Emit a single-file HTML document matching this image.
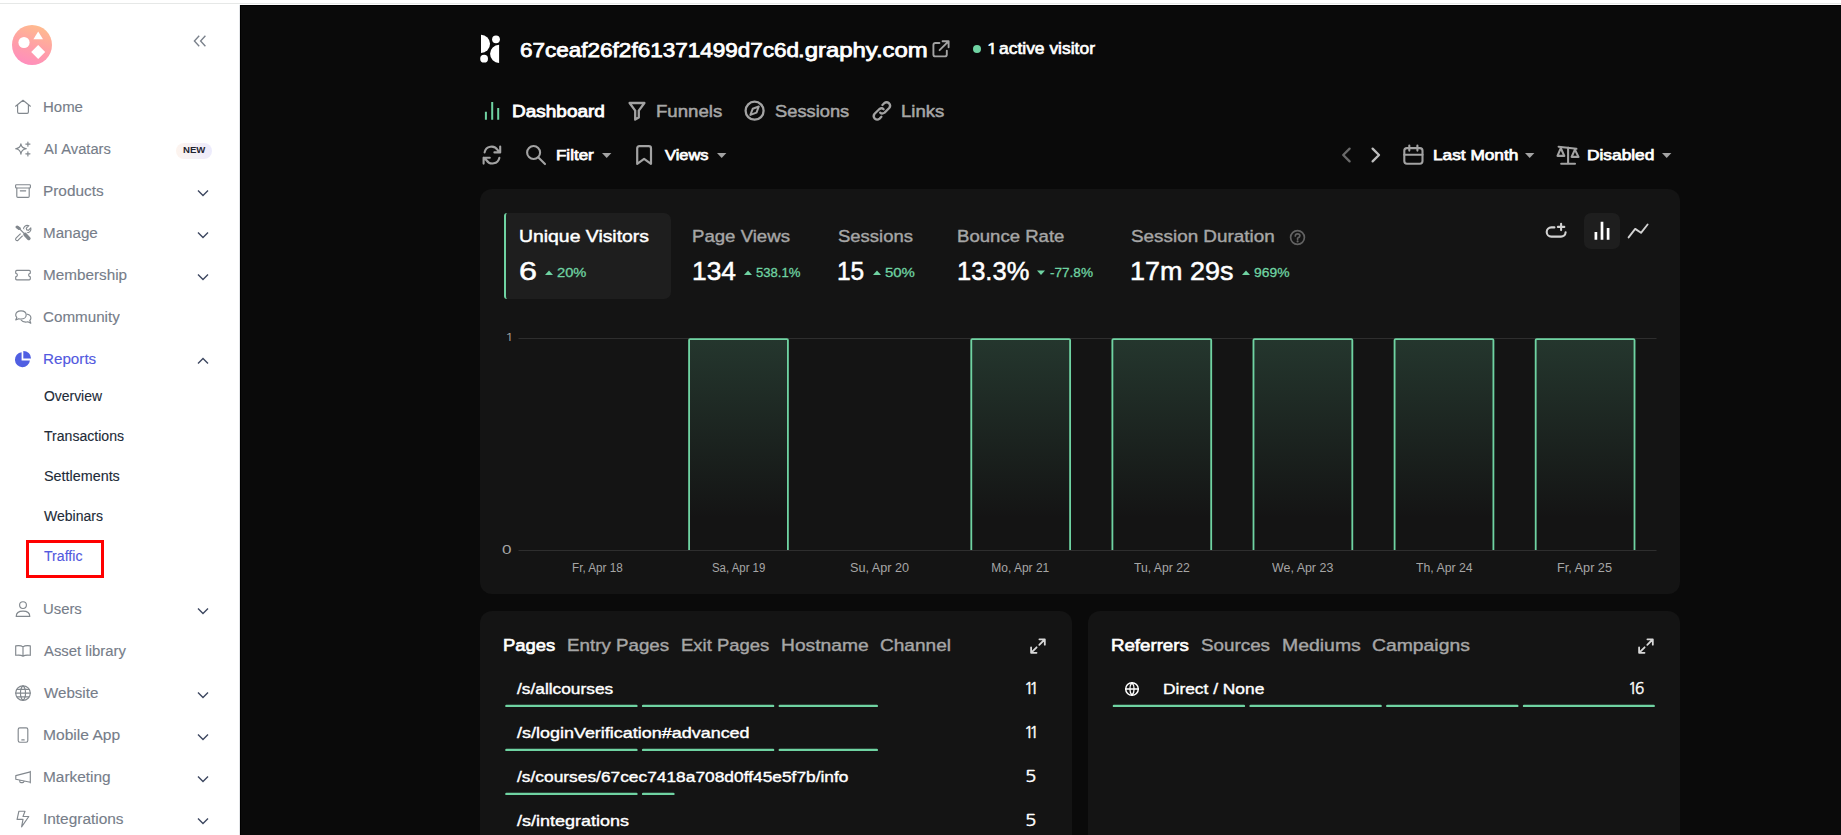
<!DOCTYPE html>
<html lang="en"><head><meta charset="utf-8"><title>Traffic - Dashboard</title>
<style>
*{box-sizing:border-box;margin:0;padding:0}
html,body{width:1841px;height:835px;overflow:hidden;background:#fff;font-family:"Liberation Sans",sans-serif}
.t{position:absolute;white-space:nowrap;line-height:1;transform-origin:0 0;display:block}
.abs{position:absolute}
h1{font-size:inherit;font-weight:inherit;margin:0}
svg{position:absolute;overflow:visible}
#topline{position:absolute;left:0;top:3px;width:1841px;height:1px;background:#e6e8e7}
#sidebar{position:absolute;left:0;top:5px;width:240px;height:830px;background:#fff;border-right:1px solid #e3e5e8}
#main{position:absolute;left:240px;top:5px;width:1601px;height:830px;background:#0a0a0a;border-top:1px solid #000;border-left:1px solid #000}
.card{position:absolute;background:#141414;border-radius:12px}
</style></head>
<body>
<div id="topline"></div>

<nav>
<div id="sidebar"></div>
<div class="abs" style="left:12px;top:25px;width:40px;height:40px;border-radius:50%;background:linear-gradient(200deg,#ffbb8e 10%,#ff9ea8 55%,#ff8cc0 95%)"></div>
<svg style="left:12px;top:25px" width="40" height="40" viewBox="0 0 40 40"><circle cx="12" cy="17.5" r="5.6" fill="#fff"/><path d="M26.2 6.5 L31 14.3 L21.4 14.3 Z" fill="#fff"/><path d="M26.2 20 L33.2 27 L26.2 34 L19.2 27 Z" fill="#fff"/></svg>
<svg style="left:193px;top:35px" width="14" height="12" viewBox="0 0 14 12"><path d="M6.2 0.8 L1.4 6 L6.2 11.2 M12.4 0.8 L7.6 6 L12.4 11.2" fill="none" stroke="#7a818b" stroke-width="1.35"/></svg>
<div class="abs" style="left:176px;top:143px;width:36px;height:16px;border-radius:8px;background:linear-gradient(90deg,#fdf4ee,#ecebfc)"></div>
<span class="t" style="left:183.12px;top:145.53px;font-size:9.3px;font-weight:700;color:#1f2430;transform:scaleX(1.0296);">NEW</span>
<div class="navitem"><span class="t" style="left:42.53px;top:99.95px;font-size:14px;color:#767d89;-webkit-text-stroke:0.12px #767d89;transform:scaleX(1.0698);">Home</span></div>
<div class="navitem"><span class="t" style="left:43.98px;top:141.95px;font-size:14px;color:#767d89;-webkit-text-stroke:0.12px #767d89;transform:scaleX(1.0526);">AI Avatars</span></div>
<div class="navitem"><span class="t" style="left:42.74px;top:183.95px;font-size:14px;color:#767d89;-webkit-text-stroke:0.12px #767d89;transform:scaleX(1.0972);">Products</span><svg style="left:197px;top:189.4px" width="12" height="8" viewBox="0 0 12 8"><path d="M1 1.4 L6 6.4 L11 1.4" fill="none" stroke="#3d4760" stroke-width="1.4"/></svg></div>
<div class="navitem"><span class="t" style="left:42.93px;top:225.95px;font-size:14px;color:#767d89;-webkit-text-stroke:0.12px #767d89;transform:scaleX(1.0827);">Manage</span><svg style="left:197px;top:231.4px" width="12" height="8" viewBox="0 0 12 8"><path d="M1 1.4 L6 6.4 L11 1.4" fill="none" stroke="#3d4760" stroke-width="1.4"/></svg></div>
<div class="navitem"><span class="t" style="left:42.74px;top:267.95px;font-size:14px;color:#767d89;-webkit-text-stroke:0.12px #767d89;transform:scaleX(1.0912);">Membership</span><svg style="left:197px;top:273.40000000000003px" width="12" height="8" viewBox="0 0 12 8"><path d="M1 1.4 L6 6.4 L11 1.4" fill="none" stroke="#3d4760" stroke-width="1.4"/></svg></div>
<div class="navitem"><span class="t" style="left:43.12px;top:309.95px;font-size:14px;color:#767d89;-webkit-text-stroke:0.12px #767d89;transform:scaleX(1.0845);">Community</span></div>
<div class="navitem"><span class="t" style="left:42.98px;top:601.75px;font-size:14px;color:#767d89;-webkit-text-stroke:0.12px #767d89;transform:scaleX(1.0606);">Users</span><svg style="left:197px;top:607.2px" width="12" height="8" viewBox="0 0 12 8"><path d="M1 1.4 L6 6.4 L11 1.4" fill="none" stroke="#3d4760" stroke-width="1.4"/></svg></div>
<div class="navitem"><span class="t" style="left:43.79px;top:643.75px;font-size:14px;color:#767d89;-webkit-text-stroke:0.12px #767d89;transform:scaleX(1.0623);">Asset library</span></div>
<div class="navitem"><span class="t" style="left:43.80px;top:685.75px;font-size:14px;color:#767d89;-webkit-text-stroke:0.12px #767d89;transform:scaleX(1.0786);">Website</span><svg style="left:197px;top:691.2px" width="12" height="8" viewBox="0 0 12 8"><path d="M1 1.4 L6 6.4 L11 1.4" fill="none" stroke="#3d4760" stroke-width="1.4"/></svg></div>
<div class="navitem"><span class="t" style="left:42.72px;top:727.75px;font-size:14px;color:#767d89;-webkit-text-stroke:0.12px #767d89;transform:scaleX(1.1133);">Mobile App</span><svg style="left:197px;top:733.2px" width="12" height="8" viewBox="0 0 12 8"><path d="M1 1.4 L6 6.4 L11 1.4" fill="none" stroke="#3d4760" stroke-width="1.4"/></svg></div>
<div class="navitem"><span class="t" style="left:42.73px;top:769.75px;font-size:14px;color:#767d89;-webkit-text-stroke:0.12px #767d89;transform:scaleX(1.1008);">Marketing</span><svg style="left:197px;top:775.2px" width="12" height="8" viewBox="0 0 12 8"><path d="M1 1.4 L6 6.4 L11 1.4" fill="none" stroke="#3d4760" stroke-width="1.4"/></svg></div>
<div class="navitem"><span class="t" style="left:43.01px;top:811.75px;font-size:14px;color:#767d89;-webkit-text-stroke:0.12px #767d89;transform:scaleX(1.1001);">Integrations</span><svg style="left:197px;top:817.2px" width="12" height="8" viewBox="0 0 12 8"><path d="M1 1.4 L6 6.4 L11 1.4" fill="none" stroke="#3d4760" stroke-width="1.4"/></svg></div>
<div class="navitem active"><span class="t" style="left:42.75px;top:351.85px;font-size:14px;color:#5259e0;-webkit-text-stroke:0.12px #5259e0;transform:scaleX(1.0853);">Reports</span><svg style="left:197px;top:357.2px" width="12" height="8" viewBox="0 0 12 8"><path d="M1 6.6 L6 1.6 L11 6.6" fill="none" stroke="#3d4760" stroke-width="1.4"/></svg></div>
<div class="subitem"><span class="t" style="left:44.23px;top:388.95px;font-size:14px;color:#222b38;-webkit-text-stroke:0.12px #222b38;transform:scaleX(0.9939);">Overview</span></div>
<div class="subitem"><span class="t" style="left:44.09px;top:428.95px;font-size:14px;color:#222b38;-webkit-text-stroke:0.12px #222b38;transform:scaleX(1.0048);">Transactions</span></div>
<div class="subitem"><span class="t" style="left:43.68px;top:468.95px;font-size:14px;color:#222b38;-webkit-text-stroke:0.12px #222b38;transform:scaleX(1.0254);">Settlements</span></div>
<div class="subitem"><span class="t" style="left:44.19px;top:508.95px;font-size:14px;color:#222b38;-webkit-text-stroke:0.12px #222b38;transform:scaleX(1.0011);">Webinars</span></div>
<div class="subitem"><span class="t" style="left:44.23px;top:548.95px;font-size:14px;color:#5259e0;-webkit-text-stroke:0.12px #5259e0;transform:scaleX(1.0083);">Traffic</span></div>

<svg style="left:15px;top:99px" width="16" height="16" viewBox="0 0 16 16"><path d="M0.6 7.2 L8 1.3 L15.4 7.2 M2.6 5.8 V13 Q2.6 14.3 3.9 14.3 H12.1 Q13.4 14.3 13.4 13 V5.8" fill="none" stroke="#82888e" stroke-width="1.15" stroke-linejoin="round" stroke-linecap="round"/></svg><svg style="left:15px;top:141px" width="16" height="16" viewBox="0 0 16 16"><path d="M5.9 2.9 Q6.4 7.2 11.4 7.7 Q6.4 8.2 5.9 13.2 Q5.4 8.2 0.6 7.7 Q5.4 7.2 5.9 2.9 Z" fill="none" stroke="#82888e" stroke-width="1.15" stroke-linejoin="round" stroke-linecap="round"/><path d="M12.9 1 V5.2 M10.8 3.1 H15 M12.9 10.7 V14.9 M10.8 12.8 H15" fill="none" stroke="#82888e" stroke-width="1.15" stroke-linejoin="round" stroke-linecap="round"/></svg><svg style="left:15px;top:183px" width="16" height="16" viewBox="0 0 16 16"><rect x="0.6" y="1.7" width="14.8" height="3.3" rx="0.8" fill="none" stroke="#82888e" stroke-width="1.15" stroke-linejoin="round" stroke-linecap="round"/><path d="M1.8 5 V13.2 Q1.8 14.3 2.9 14.3 H13.1 Q14.2 14.3 14.2 13.2 V5 M5.3 7.8 H10.7" fill="none" stroke="#82888e" stroke-width="1.15" stroke-linejoin="round" stroke-linecap="round"/></svg><svg style="left:15px;top:225px" width="16" height="16" viewBox="0 0 16 16"><path d="M1 13.1 L8.7 5.6 Q7.9 3 9.7 1.4 Q11.6 -0.1 13.9 0.7 L11.3 3.2 L11.7 4.9 L13.4 5.3 L15.8 2.9 Q16.4 5.1 14.9 6.7 Q13.2 8.3 10.8 7.7 L3.1 15.2 Q2 16 1 15.1 Q0.2 14.2 1 13.1 Z" fill="none" stroke="#82888e" stroke-width="1.15" stroke-linejoin="round" stroke-linecap="round"/><path d="M1.5 1.5 L4.6 3.7 M4.4 3.7 L9.8 9.1 M10 9.4 L14 13.6" fill="none" stroke="#fff" stroke-linecap="round" stroke-width="5.2"/><path d="M1.7 1.6 L4.6 3.6" fill="none" stroke="#82888e" stroke-width="2.9" stroke-linecap="butt"/><path d="M0.5 1.6 L1.9 0.4 L5.9 3 L5.7 4.7 L3.6 5.1 L0.5 2.4 Z" fill="#82888e"/><path d="M4.6 3.9 L9.8 9.1" fill="none" stroke="#82888e" stroke-width="1.3"/><path d="M10.1 9.5 L13.8 13.4" fill="none" stroke="#82888e" stroke-width="3.7" stroke-linecap="round"/></svg><svg style="left:15px;top:268px" width="16" height="14" viewBox="0 0 16 14"><path d="M0.7 3.4 Q0.7 2.4 1.7 2.4 H14.3 Q15.3 2.4 15.3 3.4 V5.3 Q13.6 5.6 13.6 7.1 Q13.6 8.6 15.3 8.9 V10.8 Q15.3 11.8 14.3 11.8 H1.7 Q0.7 11.8 0.7 10.8 V8.9 Q2.4 8.6 2.4 7.1 Q2.4 5.6 0.7 5.3 Z" fill="none" stroke="#82888e" stroke-width="1.15" stroke-linejoin="round" stroke-linecap="round"/></svg><svg style="left:15px;top:309px" width="17" height="16" viewBox="0 0 17 16"><path d="M6 1.8 C9.2 1.8 11.2 3.6 11.2 5.9 C11.2 8.2 9.2 10 6 10 C5.2 10 4.5 9.9 3.8 9.7 L0.7 10.9 L1.8 8.4 C1.1 7.7 0.7 6.8 0.7 5.9 C0.7 3.6 2.8 1.8 6 1.8 Z" fill="none" stroke="#82888e" stroke-width="1.15" stroke-linejoin="round" stroke-linecap="round"/><path d="M12.3 5.2 C14.4 5.6 15.9 7.1 15.9 9 C15.9 9.9 15.5 10.8 14.8 11.5 L15.8 14.3 L12.8 12.8 C12.2 13 11.5 13.1 10.7 13.1 C8.6 13.1 6.9 12.3 6.1 11" fill="none" stroke="#82888e" stroke-width="1.15" stroke-linejoin="round" stroke-linecap="round"/></svg><svg style="left:14px;top:350px" width="18" height="18" viewBox="0 0 18 18"><path d="M7.6 2.2 A7.5 7.5 0 1 0 15.9 10.4 L7.6 10.4 Z" fill="#505fe2"/><path d="M9.3 0.9 A7.7 7.7 0 0 1 17.1 8.5 L9.3 8.5 Z" fill="#505fe2"/></svg><svg style="left:15px;top:600px" width="16" height="18" viewBox="0 0 16 18"><circle cx="8" cy="5.1" r="3.4" fill="none" stroke="#82888e" stroke-width="1.15" stroke-linejoin="round" stroke-linecap="round"/><path d="M1.2 16.4 C1.2 13 4 11.1 8 11.1 C12 11.1 14.8 13 14.8 16.4 Z" fill="none" stroke="#82888e" stroke-width="1.15" stroke-linejoin="round" stroke-linecap="round"/></svg><svg style="left:15px;top:644px" width="16" height="14" viewBox="0 0 16 14"><path d="M8 2.9 C6.4 1.6 3.6 1.5 0.7 1.9 V11.3 C3.6 10.9 6.4 11 8 12.2 C9.6 11 12.4 10.9 15.3 11.3 V1.9 C12.4 1.5 9.6 1.6 8 2.9 Z M8 2.9 V12.2" fill="none" stroke="#82888e" stroke-width="1.15" stroke-linejoin="round" stroke-linecap="round"/></svg><svg style="left:15px;top:685px" width="16" height="16" viewBox="0 0 16 16"><circle cx="8" cy="8.1" r="7.3" fill="none" stroke="#82888e" stroke-width="1.15" stroke-linejoin="round" stroke-linecap="round"/><path d="M0.7 8.1 H15.3 M1.8 4.4 H14.2 M1.8 11.8 H14.2 M8 0.8 C4.6 3.6 4.6 12.6 8 15.4 M8 0.8 C11.4 3.6 11.4 12.6 8 15.4" fill="none" stroke="#82888e" stroke-width="1.15" stroke-linejoin="round" stroke-linecap="round"/></svg><svg style="left:15px;top:726px" width="16" height="18" viewBox="0 0 16 18"><rect x="3.2" y="1.8" width="9.6" height="14.4" rx="1.6" fill="none" stroke="#82888e" stroke-width="1.15" stroke-linejoin="round" stroke-linecap="round"/><path d="M6.8 13.9 H9.2" fill="none" stroke="#82888e" stroke-width="1.15" stroke-linejoin="round" stroke-linecap="round"/></svg><svg style="left:15px;top:770px" width="16" height="14" viewBox="0 0 16 14"><path d="M15.3 1.2 V12.8 M15.3 1.9 L0.8 5.6 V9.3 L15.3 12.2 M4.8 10.2 V11.4 Q4.8 12.6 6 12.6 H7.6 Q8.8 12.6 8.8 11.4 V11" fill="none" stroke="#82888e" stroke-width="1.15" stroke-linejoin="round" stroke-linecap="round"/></svg><svg style="left:15px;top:810px" width="16" height="18" viewBox="0 0 16 18"><path d="M3.9 1.2 H10 L8 6.5 H13.8 L6.6 16.8 L8 9.4 H2.1 Z" fill="none" stroke="#82888e" stroke-width="1.15" stroke-linejoin="round" stroke-linecap="round"/></svg>
<div class="abs" style="left:26px;top:540px;width:78px;height:38px;border:3px solid #f00"></div>
</nav>

<main>
<div id="main"></div>
<header><svg style="left:480px;top:34px" width="20" height="30" viewBox="0 0 20 30"><path d="M1 0.8 A9.05 9.05 0 0 1 1 18.9 Z" fill="#fff"/><circle cx="16" cy="5.3" r="3.9" fill="#fff"/><circle cx="4.1" cy="24.7" r="3.9" fill="#fff"/><path d="M19.1 10.8 A9.05 9.05 0 0 0 19.1 28.9 Z" fill="#fff"/></svg><h1><span class="t" style="left:519.72px;top:40.79px;font-size:19.6px;color:#ffffff;-webkit-text-stroke:0.75px #ffffff;transform:scaleX(1.1487);">67ceaf26f2f61371499d7c6d</span><span class="t" style="left:797.72px;top:40.79px;font-size:19.6px;color:#ffffff;-webkit-text-stroke:0.75px #ffffff;transform:scaleX(1.2196);">.graphy.com</span></h1><svg style="left:932px;top:40px" width="18" height="18" viewBox="0 0 18 18"><path d="M7.4 3 H3.4 Q1.4 3 1.4 5 V14.4 Q1.4 16.4 3.4 16.4 H12.8 Q14.8 16.4 14.8 14.4 V10.6 M10.6 1.2 H16.6 V7.2 M16.4 1.4 L7.6 10.2" fill="none" stroke="#a3a3a3" stroke-width="1.9" stroke-linejoin="round" stroke-linecap="round"/></svg><div class="abs" style="left:972.8px;top:44.8px;width:8.3px;height:8.3px;border-radius:50%;background:#6fd3a2"></div><span class="t" style="left:986.21px;top:41.77px;font-size:14.8px;color:#ffffff;-webkit-text-stroke:0.65px #ffffff;font-family:NanumGothic,'Liberation Sans',sans-serif;transform:scaleX(1.3085);">1 </span><span class="t" style="left:998.64px;top:40.76px;font-size:16px;color:#ffffff;-webkit-text-stroke:0.65px #ffffff;transform:scaleX(1.0899);">active visitor</span></header>
<div class="tabs"><svg style="left:484px;top:101px" width="16" height="20" viewBox="0 0 16 20"><path d="M1.9 10.7 V18.8 M8.2 0.9 V18.8 M14.2 6.9 V18.8" fill="none" stroke="#6fd3a2" stroke-width="2" stroke-linecap="butt"/></svg><span class="t" style="left:511.82px;top:104.30px;font-size:16.9px;color:#ffffff;-webkit-text-stroke:0.8px #ffffff;transform:scaleX(1.1242);">Dashboard</span><svg style="left:628px;top:101px" width="18" height="20" viewBox="0 0 18 20"><path d="M1.6 2 H16.4 L10.8 9.6 V16.6 L7.2 18.6 V9.6 Z" fill="none" stroke="#a3a3a3" stroke-width="2.3" stroke-linejoin="round" stroke-linecap="round"/></svg><span class="t" style="left:656.30px;top:104.47px;font-size:16.9px;color:#a6a6a6;-webkit-text-stroke:0.5px #a6a6a6;transform:scaleX(1.1022);">Funnels</span><svg style="left:744px;top:100px" width="22" height="22" viewBox="0 0 22 22"><circle cx="10.6" cy="10.7" r="9" fill="none" stroke="#a3a3a3" stroke-width="2.3" stroke-linejoin="round" stroke-linecap="round"/><path d="M14.8 6.5 L12.5 12.6 L6.4 14.9 L8.7 8.8 Z" fill="none" stroke="#a3a3a3" stroke-width="2" stroke-linejoin="round" stroke-linecap="round"/></svg><span class="t" style="left:775.08px;top:104.47px;font-size:16.9px;color:#a6a6a6;-webkit-text-stroke:0.5px #a6a6a6;transform:scaleX(1.0834);">Sessions</span><svg style="left:871px;top:100px" width="22" height="22" viewBox="0 0 22 22"><path d="M9.2 12.6 Q11 14.4 13.6 12.6 L18.2 8 Q20.2 5.6 18 3.2 Q15.6 1.2 13.2 3.2 L11.4 5 M12.6 9.2 Q10.8 7.4 8.2 9.2 L3.6 13.8 Q1.6 16.2 3.8 18.6 Q6.2 20.6 8.6 18.6 L10.4 16.8" fill="none" stroke="#a3a3a3" stroke-width="2.3" stroke-linejoin="round" stroke-linecap="round"/></svg><span class="t" style="left:900.78px;top:104.47px;font-size:16.9px;color:#a6a6a6;-webkit-text-stroke:0.5px #a6a6a6;transform:scaleX(1.1009);">Links</span></div>
<div class="toolbar"><svg style="left:0px;top:0px" width="1841" height="835" viewBox="0 0 1841 835"><path d="M500.2 146.6 V152.4 H494.4 M483.6 163.6 V157.7 H489.8 M484.6 152.4 A7.1 7.1 0 0 1 497.6 150 L500.2 152.4 M499.4 157.7 A7.1 7.1 0 0 1 486.4 160.1 L483.6 157.7" fill="none" stroke="#a3a3a3" stroke-width="2.1" stroke-linejoin="round" stroke-linecap="round"/><circle cx="533.6" cy="152.5" r="6.5" fill="none" stroke="#a3a3a3" stroke-width="2.1" stroke-linejoin="round" stroke-linecap="round"/><path d="M538.4 157.6 L545 164.1" fill="none" stroke="#a3a3a3" stroke-width="2.1" stroke-linejoin="round" stroke-linecap="round"/></svg><span class="t" style="left:555.51px;top:147.06px;font-size:15.4px;color:#ffffff;-webkit-text-stroke:0.75px #ffffff;transform:scaleX(1.1034);">Filter</span><svg style="left:601.8px;top:152.8px" width="10" height="6" viewBox="0 0 10 6"><path d="M0 0 H9.4 L4.7 5 Z" fill="#a3a3a3"/></svg><svg style="left:635px;top:144px" width="19" height="22" viewBox="0 0 19 22"><path d="M2.2 4.4 Q2.2 2.2 4.4 2.2 H13.8 Q16 2.2 16 4.4 V19.8 L9.1 14.8 L2.2 19.8 Z" fill="none" stroke="#a3a3a3" stroke-width="2.2" stroke-linejoin="round" stroke-linecap="round"/></svg><span class="t" style="left:665.30px;top:147.06px;font-size:15.4px;color:#ffffff;-webkit-text-stroke:0.75px #ffffff;transform:scaleX(1.0653);">Views</span><svg style="left:716.6px;top:152.8px" width="10" height="6" viewBox="0 0 10 6"><path d="M0 0 H9.4 L4.7 5 Z" fill="#a3a3a3"/></svg><svg style="left:0px;top:0px" width="1841" height="835" viewBox="0 0 1841 835"><path d="M1349.6 148.6 L1343.2 155 L1349.6 161.4" fill="none" stroke="#6a6a6a" stroke-width="2.3" stroke-linejoin="round" stroke-linecap="round"/><path d="M1372.6 148.6 L1379 155 L1372.6 161.4" fill="none" stroke="#bdbdbd" stroke-width="2.3" stroke-linejoin="round" stroke-linecap="round"/><rect x="1404.3" y="148.1" width="18.2" height="15.6" rx="2.6" fill="none" stroke="#a3a3a3" stroke-width="2.1" stroke-linejoin="round" stroke-linecap="round"/><path d="M1404.3 154.7 H1422.5 M1409.3 145.6 V150.6 M1417.4 145.6 V150.6" fill="none" stroke="#a3a3a3" stroke-width="2.1" stroke-linejoin="round" stroke-linecap="round"/></svg><span class="t" style="left:1432.72px;top:147.06px;font-size:15.4px;color:#ffffff;-webkit-text-stroke:0.75px #ffffff;transform:scaleX(1.1204);">Last Month</span><svg style="left:1525.4px;top:152.8px" width="10" height="6" viewBox="0 0 10 6"><path d="M0 0 H9.4 L4.7 5 Z" fill="#a3a3a3"/></svg><svg style="left:0px;top:0px" width="1841" height="835" viewBox="0 0 1841 835"><path d="M1568.1 147.6 V163.4 M1561.2 163.8 H1575 M1558.6 146.7 L1576.4 148.8 M1560.8 148.2 L1557.5 155.9 H1564.3 Z M1574.9 149.6 L1571.6 156.9 H1578.5 Z" fill="none" stroke="#a3a3a3" stroke-width="2.1" stroke-linejoin="round" stroke-linecap="round"/></svg><span class="t" style="left:1587.42px;top:147.06px;font-size:15.4px;color:#ffffff;-webkit-text-stroke:0.75px #ffffff;transform:scaleX(1.1247);">Disabled</span><svg style="left:1661.6px;top:152.8px" width="10" height="6" viewBox="0 0 10 6"><path d="M0 0 H9.4 L4.7 5 Z" fill="#a3a3a3"/></svg></div>
<section class="chart"><div class="card" style="left:480px;top:189px;width:1200px;height:405px"></div><div class="abs" style="left:504px;top:213px;width:167px;height:86px;border-radius:3px 7px 7px 3px;background:#1e1e1e;border-left:2px solid #6fd3a2"></div><span class="t" style="left:518.95px;top:227.74px;font-size:17.2px;color:#ffffff;-webkit-text-stroke:0.45px #ffffff;transform:scaleX(1.1276);">Unique Visitors</span><span class="t" style="left:692.18px;top:227.74px;font-size:17.2px;color:#a6a6a6;-webkit-text-stroke:0.4px #a6a6a6;transform:scaleX(1.0827);">Page Views</span><span class="t" style="left:837.92px;top:227.74px;font-size:17.2px;color:#a6a6a6;-webkit-text-stroke:0.4px #a6a6a6;transform:scaleX(1.0740);">Sessions</span><span class="t" style="left:956.91px;top:227.74px;font-size:17.2px;color:#a6a6a6;-webkit-text-stroke:0.4px #a6a6a6;transform:scaleX(1.0806);">Bounce Rate</span><span class="t" style="left:1130.83px;top:227.74px;font-size:17.2px;color:#a6a6a6;-webkit-text-stroke:0.4px #a6a6a6;transform:scaleX(1.0977);">Session Duration</span><svg style="left:1290px;top:229.5px" width="16" height="16" viewBox="0 0 16 16"><circle cx="7.5" cy="7.5" r="6.9" fill="none" stroke="#626262" stroke-width="1.7" stroke-linejoin="round" stroke-linecap="round"/><path d="M5.3 5.9 Q5.3 3.8 7.6 3.8 Q9.9 3.8 9.9 5.8 Q9.9 7.1 7.6 8.2 V9.3" fill="none" stroke="#626262" stroke-width="1.7" stroke-linejoin="round" stroke-linecap="round"/><circle cx="7.6" cy="11.4" r="1.05" fill="#626262"/></svg><span class="t" style="left:519.35px;top:258.22px;font-size:26.2px;color:#ffffff;-webkit-text-stroke:0.5px #ffffff;transform:scaleX(1.2349);">6</span><span class="t" style="left:691.65px;top:258.22px;font-size:26.2px;color:#ffffff;-webkit-text-stroke:0.5px #ffffff;transform:scaleX(1.0080);">134</span><span class="t" style="left:837.22px;top:258.22px;font-size:26.2px;color:#ffffff;-webkit-text-stroke:0.5px #ffffff;transform:scaleX(0.9344);">15</span><span class="t" style="left:956.98px;top:258.22px;font-size:26.2px;color:#ffffff;-webkit-text-stroke:0.5px #ffffff;transform:scaleX(0.9740);">13.3%</span><span class="t" style="left:1130.26px;top:258.22px;font-size:26.2px;color:#ffffff;-webkit-text-stroke:0.5px #ffffff;transform:scaleX(1.0302);">17m 29s</span><svg style="left:545px;top:269.6px" width="9" height="6" viewBox="0 0 9 6"><path d="M0 5 L4 0.4 L8 5 Z" fill="#6fd3a2"/></svg><span class="t" style="left:556.51px;top:266.30px;font-size:13.6px;color:#6fd3a2;-webkit-text-stroke:0.3px #6fd3a2;transform:scaleX(1.0827);">20%</span><svg style="left:744px;top:269.6px" width="9" height="6" viewBox="0 0 9 6"><path d="M0 5 L4 0.4 L8 5 Z" fill="#6fd3a2"/></svg><span class="t" style="left:756.24px;top:266.30px;font-size:13.6px;color:#6fd3a2;-webkit-text-stroke:0.3px #6fd3a2;transform:scaleX(0.9644);">538.1%</span><svg style="left:873.2px;top:269.6px" width="9" height="6" viewBox="0 0 9 6"><path d="M0 5 L4 0.4 L8 5 Z" fill="#6fd3a2"/></svg><span class="t" style="left:884.83px;top:266.31px;font-size:13.6px;color:#6fd3a2;-webkit-text-stroke:0.3px #6fd3a2;transform:scaleX(1.0992);">50%</span><svg style="left:1037.2px;top:269.6px" width="9" height="6" viewBox="0 0 9 6"><path d="M0 0.4 L4 5 L8 0.4 Z" fill="#6fd3a2"/></svg><span class="t" style="left:1049.94px;top:266.32px;font-size:13.6px;color:#6fd3a2;-webkit-text-stroke:0.3px #6fd3a2;transform:scaleX(0.9976);">-77.8%</span><svg style="left:1242.2px;top:269.6px" width="9" height="6" viewBox="0 0 9 6"><path d="M0 5 L4 0.4 L8 5 Z" fill="#6fd3a2"/></svg><span class="t" style="left:1253.86px;top:266.30px;font-size:13.6px;color:#6fd3a2;-webkit-text-stroke:0.3px #6fd3a2;transform:scaleX(1.0208);">969%</span><div class="abs" style="left:1584px;top:213px;width:36px;height:36px;border-radius:7px;background:#1e1e1e"></div><svg style="left:0px;top:0px" width="1841" height="835" viewBox="0 0 1841 835"><path d="M1554.4 227.4 H1551.3 A4.6 4.6 0 0 0 1551.3 236.6 H1561 A4.6 4.6 0 0 0 1565.6 232.4 M1561.1 223.7 V230.1 M1557.9 226.9 H1564.3" fill="none" stroke="#d2d2d2" stroke-width="2.1" stroke-linejoin="round" stroke-linecap="round"/><path d="M1595.9 231.9 V239.7 M1602 221.8 V239.7 M1608.1 227.9 V239.7" fill="none" stroke="#fff" stroke-width="2.7"/><path d="M1628.6 237.4 L1635.2 228.9 L1641 232.8 L1647.6 224.5" fill="none" stroke="#d2d2d2" stroke-width="1.9" stroke-linejoin="round" stroke-linecap="round"/></svg><svg style="left:0;top:0" width="1841" height="835" viewBox="0 0 1841 835"><defs><linearGradient id="bg" x1="0" y1="0" x2="0" y2="1"><stop offset="0" stop-color="#6fd3a2" stop-opacity="0.18"/><stop offset="0.85" stop-color="#6fd3a2" stop-opacity="0"/></linearGradient></defs><path d="M518.5 338.5 H1656.5 M518.5 550.5 H1656.5" stroke="#2e2e2e" stroke-width="1" fill="none"/><rect x="688.1" y="339" width="100.8" height="211" fill="url(#bg)"/><path d="M689.1 550 V340.2 Q689.1 339.2 690.1 339.2 H786.9 Q787.9 339.2 787.9 340.2 V550" fill="none" stroke="#6fd3a2" stroke-width="1.8"/><rect x="970.3" y="339" width="100.8" height="211" fill="url(#bg)"/><path d="M971.3 550 V340.2 Q971.3 339.2 972.3 339.2 H1069.1 Q1070.1 339.2 1070.1 340.2 V550" fill="none" stroke="#6fd3a2" stroke-width="1.8"/><rect x="1111.4" y="339" width="100.8" height="211" fill="url(#bg)"/><path d="M1112.4 550 V340.2 Q1112.4 339.2 1113.4 339.2 H1210.2 Q1211.2 339.2 1211.2 340.2 V550" fill="none" stroke="#6fd3a2" stroke-width="1.8"/><rect x="1252.5" y="339" width="100.8" height="211" fill="url(#bg)"/><path d="M1253.5 550 V340.2 Q1253.5 339.2 1254.5 339.2 H1351.3 Q1352.3 339.2 1352.3 340.2 V550" fill="none" stroke="#6fd3a2" stroke-width="1.8"/><rect x="1393.6" y="339" width="100.8" height="211" fill="url(#bg)"/><path d="M1394.6 550 V340.2 Q1394.6 339.2 1395.6 339.2 H1492.4 Q1493.4 339.2 1493.4 340.2 V550" fill="none" stroke="#6fd3a2" stroke-width="1.8"/><rect x="1534.7" y="339" width="100.8" height="211" fill="url(#bg)"/><path d="M1535.7 550 V340.2 Q1535.7 339.2 1536.7 339.2 H1633.5 Q1634.5 339.2 1634.5 340.2 V550" fill="none" stroke="#6fd3a2" stroke-width="1.8"/></svg><span class="t" style="left:504.71px;top:331.72px;font-size:11.2px;color:#a6a6a6;font-family:NanumGothic,'Liberation Sans',sans-serif;transform:scaleX(1.3058);">1</span><span class="t" style="left:501.58px;top:544.14px;font-size:12px;color:#a6a6a6;transform:scaleX(1.4231);">0</span><span class="t" style="left:572.20px;top:561.94px;font-size:12px;color:#a6a6a6;transform:scaleX(0.9743);">Fr, Apr 18</span><span class="t" style="left:712.15px;top:561.94px;font-size:12px;color:#a6a6a6;transform:scaleX(0.9511);">Sa, Apr 19</span><span class="t" style="left:849.76px;top:561.94px;font-size:12px;color:#a6a6a6;transform:scaleX(1.0550);">Su, Apr 20</span><span class="t" style="left:991.26px;top:561.94px;font-size:12px;color:#a6a6a6;">Mo, Apr 21</span><span class="t" style="left:1134.11px;top:561.94px;font-size:12px;color:#a6a6a6;transform:scaleX(1.0142);">Tu, Apr 22</span><span class="t" style="left:1272.32px;top:561.94px;font-size:12px;color:#a6a6a6;transform:scaleX(1.0364);">We, Apr 23</span><span class="t" style="left:1415.67px;top:561.94px;font-size:12px;color:#a6a6a6;transform:scaleX(1.0239);">Th, Apr 24</span><span class="t" style="left:1557.43px;top:561.94px;font-size:12px;color:#a6a6a6;transform:scaleX(1.0567);">Fr, Apr 25</span></section>
<section class="tables"><div class="card" style="left:480px;top:611px;width:592px;height:260px"></div><div class="card" style="left:1088px;top:611px;width:592px;height:260px"></div><span class="t" style="left:503.25px;top:636.56px;font-size:17.4px;color:#ffffff;-webkit-text-stroke:0.65px #ffffff;transform:scaleX(1.0603);">Pages</span><span class="t" style="left:566.82px;top:637.39px;font-size:17.4px;color:#a6a6a6;-webkit-text-stroke:0.4px #a6a6a6;transform:scaleX(1.0784);">Entry Pages</span><span class="t" style="left:680.71px;top:637.40px;font-size:17.4px;color:#a6a6a6;-webkit-text-stroke:0.4px #a6a6a6;transform:scaleX(1.0623);">Exit Pages</span><span class="t" style="left:780.66px;top:637.39px;font-size:17.4px;color:#a6a6a6;-webkit-text-stroke:0.4px #a6a6a6;transform:scaleX(1.1068);">Hostname</span><span class="t" style="left:880.09px;top:637.39px;font-size:17.4px;color:#a6a6a6;-webkit-text-stroke:0.4px #a6a6a6;transform:scaleX(1.0954);">Channel</span><span class="t" style="left:1111.26px;top:636.56px;font-size:17.4px;color:#ffffff;-webkit-text-stroke:0.65px #ffffff;transform:scaleX(1.0734);">Referrers</span><span class="t" style="left:1200.82px;top:637.39px;font-size:17.4px;color:#a6a6a6;-webkit-text-stroke:0.4px #a6a6a6;transform:scaleX(1.0820);">Sources</span><span class="t" style="left:1281.65px;top:637.39px;font-size:17.4px;color:#a6a6a6;-webkit-text-stroke:0.4px #a6a6a6;transform:scaleX(1.1169);">Mediums</span><span class="t" style="left:1372.26px;top:637.39px;font-size:17.4px;color:#a6a6a6;-webkit-text-stroke:0.4px #a6a6a6;transform:scaleX(1.1119);">Campaigns</span><svg style="left:1030px;top:638px" width="17" height="17" viewBox="0 0 17 17"><path d="M9.4 1.3 H14.8 V6.7 M14.6 1.5 L9.3 6.8 M6.5 14.8 H1.1 V9.4 M1.3 14.6 L6.6 9.3" fill="none" stroke="#d8d8d8" stroke-width="1.8" stroke-linejoin="round" stroke-linecap="round"/></svg><svg style="left:1638px;top:638px" width="17" height="17" viewBox="0 0 17 17"><path d="M9.4 1.3 H14.8 V6.7 M14.6 1.5 L9.3 6.8 M6.5 14.8 H1.1 V9.4 M1.3 14.6 L6.6 9.3" fill="none" stroke="#d8d8d8" stroke-width="1.8" stroke-linejoin="round" stroke-linecap="round"/></svg><span class="t" style="left:516.59px;top:681.26px;font-size:15.4px;color:#ffffff;-webkit-text-stroke:0.4px #ffffff;transform:scaleX(1.1245);">/s/allcourses</span><span class="t" style="left:1024.46px;top:681.43px;font-size:15.2px;color:#ffffff;-webkit-text-stroke:0.4px #ffffff;letter-spacing:-4.2px;font-family:NanumGothic,'Liberation Sans',sans-serif;transform:scaleX(1.0606);">11</span><svg style="left:0;top:0" width="1841" height="835" viewBox="0 0 1841 835"><rect x="505.2" y="704.7" width="132.4" height="2.4" rx="1.2" fill="#6fd3a2"/><rect x="641.9" y="704.7" width="132.4" height="2.4" rx="1.2" fill="#6fd3a2"/><rect x="778.6" y="704.7" width="99.4" height="2.4" rx="1.2" fill="#6fd3a2"/></svg><span class="t" style="left:516.65px;top:725.26px;font-size:15.4px;color:#ffffff;-webkit-text-stroke:0.4px #ffffff;transform:scaleX(1.1667);">/s/loginVerification#advanced</span><span class="t" style="left:1024.46px;top:725.43px;font-size:15.2px;color:#ffffff;-webkit-text-stroke:0.4px #ffffff;letter-spacing:-4.2px;font-family:NanumGothic,'Liberation Sans',sans-serif;transform:scaleX(1.0606);">11</span><svg style="left:0;top:0" width="1841" height="835" viewBox="0 0 1841 835"><rect x="505.2" y="748.7" width="132.4" height="2.4" rx="1.2" fill="#6fd3a2"/><rect x="641.9" y="748.7" width="132.4" height="2.4" rx="1.2" fill="#6fd3a2"/><rect x="778.6" y="748.7" width="99.4" height="2.4" rx="1.2" fill="#6fd3a2"/></svg><span class="t" style="left:517.03px;top:769.26px;font-size:15.4px;color:#ffffff;-webkit-text-stroke:0.4px #ffffff;transform:scaleX(1.1272);">/s/courses/67cec7418a708d0ff45e5f7b/info</span><span class="t" style="left:1025.42px;top:769.43px;font-size:15.2px;color:#ffffff;-webkit-text-stroke:0.4px #ffffff;font-family:NanumGothic,'Liberation Sans',sans-serif;transform:scaleX(1.2440);">5</span><svg style="left:0;top:0" width="1841" height="835" viewBox="0 0 1841 835"><rect x="505.2" y="792.7" width="132.4" height="2.4" rx="1.2" fill="#6fd3a2"/><rect x="641.9" y="792.7" width="32.7" height="2.4" rx="1.2" fill="#6fd3a2"/></svg><span class="t" style="left:516.56px;top:813.26px;font-size:15.4px;color:#ffffff;-webkit-text-stroke:0.4px #ffffff;transform:scaleX(1.1702);">/s/integrations</span><span class="t" style="left:1025.42px;top:813.43px;font-size:15.2px;color:#ffffff;-webkit-text-stroke:0.4px #ffffff;font-family:NanumGothic,'Liberation Sans',sans-serif;transform:scaleX(1.2440);">5</span><svg style="left:0;top:0" width="1841" height="835" viewBox="0 0 1841 835"><rect x="505.2" y="836.7" width="132.4" height="2.4" rx="1.2" fill="#6fd3a2"/><rect x="641.9" y="836.7" width="32.7" height="2.4" rx="1.2" fill="#6fd3a2"/></svg><svg style="left:1124px;top:682px" width="16" height="16" viewBox="0 0 16 16"><circle cx="8" cy="7" r="6.3" fill="none" stroke="#fff" stroke-width="1.5" stroke-linejoin="round" stroke-linecap="round"/><path d="M1.7 7 H14.3 M8 0.7 C5.2 3.4 5.2 10.6 8 13.3 M8 0.7 C10.8 3.4 10.8 10.6 8 13.3" fill="none" stroke="#fff" stroke-width="1.3" stroke-linejoin="round" stroke-linecap="round"/></svg><span class="t" style="left:1163.01px;top:681.26px;font-size:15.4px;color:#ffffff;-webkit-text-stroke:0.4px #ffffff;transform:scaleX(1.1284);">Direct / None</span><span class="t" style="left:1627.64px;top:681.43px;font-size:15.2px;color:#ffffff;-webkit-text-stroke:0.4px #ffffff;letter-spacing:-2.2px;font-family:NanumGothic,'Liberation Sans',sans-serif;transform:scaleX(1.0072);">16</span><svg style="left:0;top:0" width="1841" height="835" viewBox="0 0 1841 835"><rect x="1112.7" y="704.7" width="132.4" height="2.4" rx="1.2" fill="#6fd3a2"/><rect x="1249.4" y="704.7" width="132.4" height="2.4" rx="1.2" fill="#6fd3a2"/><rect x="1386.1" y="704.7" width="132.4" height="2.4" rx="1.2" fill="#6fd3a2"/><rect x="1522.8" y="704.7" width="132.1" height="2.4" rx="1.2" fill="#6fd3a2"/></svg></section>
</main>

</body></html>
